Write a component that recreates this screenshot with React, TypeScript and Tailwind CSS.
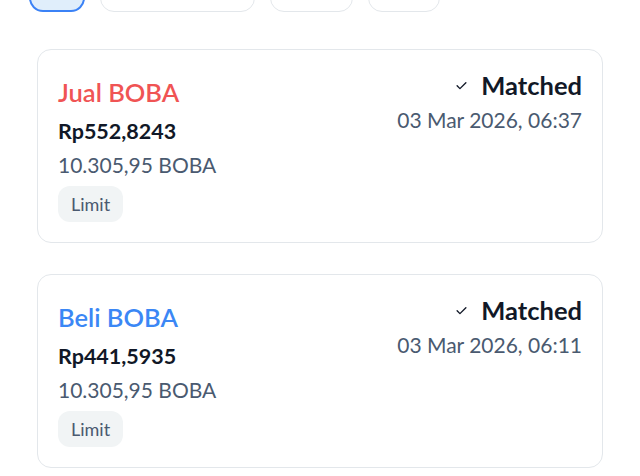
import React from "react";

type Order = {
  side: string;
  color: string;
  price: string;
  amount: string;
  date: string;
};

const orders: Order[] = [
  { side: "Jual BOBA", color: "text-[#f05454]", price: "Rp552,8243", amount: "10.305,95 BOBA", date: "03 Mar 2026, 06:37" },
  { side: "Beli BOBA", color: "text-[#3b87f5]", price: "Rp441,5935", amount: "10.305,95 BOBA", date: "03 Mar 2026, 06:11" },
];

function Check() {
  return (
    <svg width="15" height="15" viewBox="0 0 24 24" fill="none" stroke="#111827" strokeWidth="2.2" strokeLinecap="round" strokeLinejoin="round">
      <path d="M5 12.5l4.5 4.5L19 7.5" />
    </svg>
  );
}

function Card({ o }: { o: Order }) {
  return (
    <div className="flex justify-between rounded-[14px] border-[1.5px] border-[#e3e7eb] bg-white pl-5 pr-5 pt-[19px] pb-5">
      <div className="flex flex-col items-start pt-[7px]">
        <div className={`text-[25.5px] leading-[32px] font-semibold ${o.color}`}>{o.side}</div>
        <div className="mt-[9px] text-[21.5px] leading-[28px] font-bold text-[#111827]">{o.price}</div>
        <div className="mt-[6px] text-[21px] leading-[28px] text-[#4a5a70]">{o.amount}</div>
        <div className="mt-[7px] flex h-[36px] items-center rounded-[12px] bg-[#f1f4f5] px-[13px] text-[18px] text-[#4a5a70]">Limit</div>
      </div>
      <div className="flex flex-col items-end">
        <div className="flex items-center gap-[12px]">
          <Check />
          <span className="text-[25.5px] leading-[32px] font-bold text-[#111827]">Matched</span>
        </div>
        <div className="mt-[5px] text-[21px] leading-[28px] text-[#4a5a70]">{o.date}</div>
      </div>
    </div>
  );
}

export default function App() {
  return (
    <div className="h-[476px] w-[640px] overflow-hidden bg-white" style={{ fontFamily: "Lato, 'Noto Sans', sans-serif" }}>
      <div className="-mt-[24px] flex gap-[15px] pl-[29px]">
        <div className="h-[36px] w-[56px] rounded-[14px] border-2 border-[#3b82f6] bg-[#e0eefb]" />
        <div className="h-[36px] w-[155px] rounded-[14px] border-[1.5px] border-[#e3e7eb] bg-white" />
        <div className="h-[36px] w-[83px] rounded-[14px] border-[1.5px] border-[#e3e7eb] bg-white" />
        <div className="h-[36px] w-[72px] rounded-[14px] border-[1.5px] border-[#e3e7eb] bg-white" />
      </div>
      <div className="mt-[37px] flex flex-col gap-[31px] px-[37px]">
        {orders.map((o) => (
          <Card key={o.price} o={o} />
        ))}
      </div>
    </div>
  );
}
